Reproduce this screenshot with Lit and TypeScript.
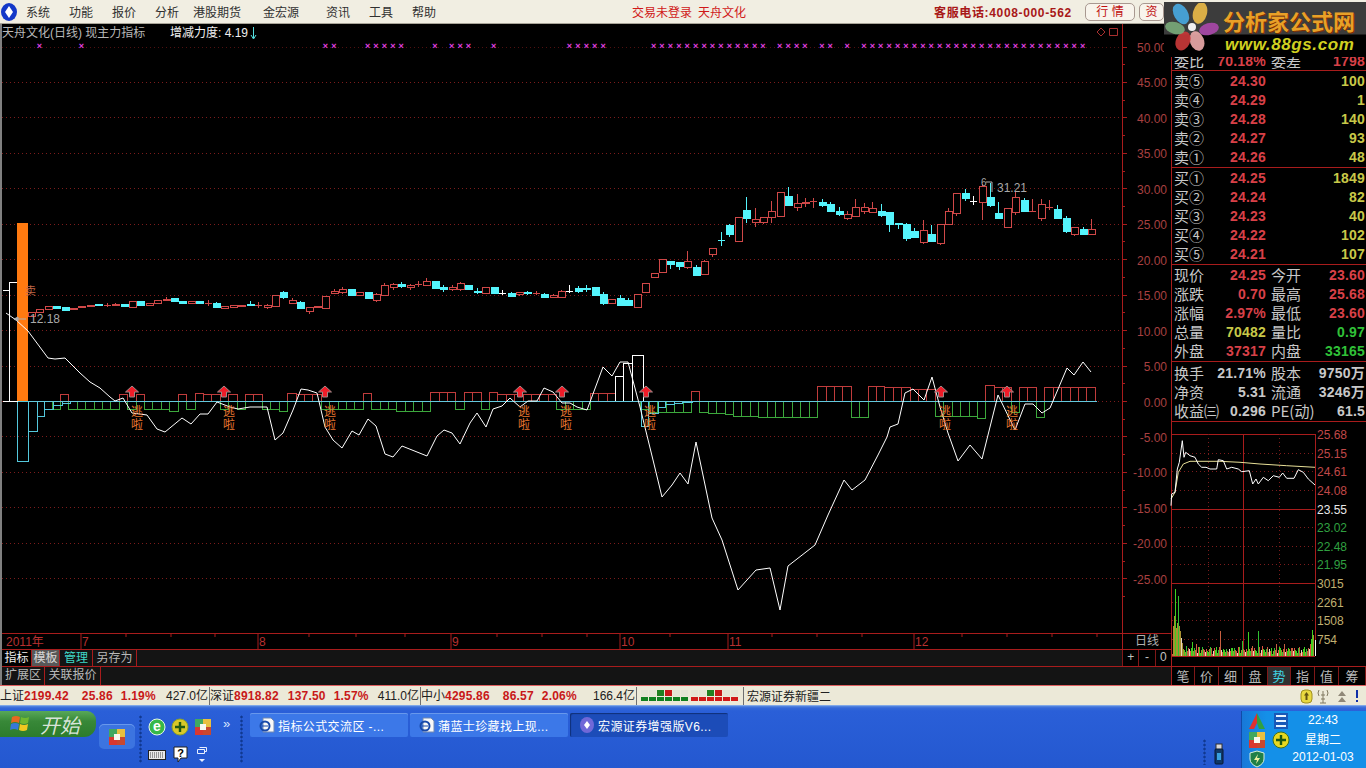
import { LitElement, html, css, svg } from "lit";
import { customElement } from "lit/decorators.js";

const SANS = css`"Liberation Sans", "Noto Sans CJK SC", sans-serif`;

// y position of a price on the main chart, in svg px (svg starts at page y=24)
const TOP = 24;
const LEVELS = [50, 45, 40, 35, 30, 25, 20, 15, 10, 5, 0, -5, -10, -15, -20, -25];
const levelY = (v: number) => 401.5 - (v / 5) * 35.45 - TOP;

const STEP = 8.413;
const barX = (i: number) => 31 + STEP * i;

// kind, body top, body bottom, wick high, wick low (page px)
type Candle = [string, number, number, number?, number?];
const CANDLES: Candle[] = [
    ["r", 312, 316], ["r", 309, 312], ["r", 306, 309], ["c", 306, 308], ["c", 307, 310],
    ["r", 308, 309], ["r", 306, 307], ["r", 305, 306], ["c", 304, 305], ["r", 305, 305, 303, 307],
    ["r", 304, 305, 303, 306], ["c", 304, 306], ["r", 301, 307], ["c", 301, 305], ["r", 303, 305],
    ["r", 300, 303], ["r", 299, 300, 297, 301], ["c", 298, 301], ["c", 301, 303], ["r", 301, 303],
    ["c", 301, 303], ["r", 303, 303, 300, 306], ["c", 303, 307, 302, 308], ["r", 306, 308], ["r", 305, 307],
    ["r", 305, 306], ["c", 304, 305, 301, 306], ["r", 305, 305, 302, 308], ["r", 305, 307, 304, 309], ["r", 295, 306],
    ["c", 292, 297, 291, 299], ["r", 300, 303, 298, 304], ["c", 302, 308, 301, 309], ["r", 307, 311, 307, 314], ["r", 306, 307],
    ["r", 296, 308, 296, 309], ["r", 291, 293, 289, 294], ["r", 289, 292, 287, 294], ["c", 289, 295], ["r", 292, 295],
    ["c", 292, 298], ["r", 294, 300, 293, 302], ["r", 285, 295, 283, 296], ["r", 284, 287, 283, 290], ["c", 284, 286, 282, 288],
    ["r", 285, 287, 284, 290], ["r", 284, 284, 281, 287], ["r", 281, 285, 278, 286], ["c", 281, 288], ["c", 287, 289, 285, 292],
    ["r", 287, 289, 285, 291], ["r", 283, 289, 282, 291], ["c", 285, 289], ["c", 291, 292, 288, 294], ["r", 287, 293],
    ["c", 287, 293], ["w", 293, 293, 290, 295], ["c", 293, 296, 292, 297], ["r", 292, 294, 292, 296], ["c", 292, 293, 291, 295],
    ["r", 293, 293, 291, 295], ["c", 294, 297, 293, 298], ["r", 295, 297, 294, 298], ["r", 291, 297, 290, 298], ["w", 291, 291, 285, 293],
    ["c", 288, 291, 286, 293], ["c", 288, 289, 285, 292], ["c", 287, 295], ["c", 294, 303, 292, 305], ["r", 299, 303],
    ["c", 298, 305, 295, 306], ["c", 300, 305, 298, 306], ["r", 294, 307, 294, 308], ["r", 283, 292, 283, 293], ["r", 273, 277],
    ["r", 259, 272, 259, 273], ["c", 261, 264, 261, 269], ["c", 262, 266, 262, 270], ["r", 261, 267, 251, 269], ["c", 267, 275, 265, 276],
    ["r", 261, 274, 260, 275], ["r", 248, 254, 248, 257], ["c", 240, 240, 232, 246], ["c", 225, 234, 224, 237], ["r", 217, 241],
    ["c", 210, 218, 197, 223], ["r", 219, 222, 208, 227], ["r", 217, 222, 217, 224], ["r", 211, 217, 201, 223], ["r", 192, 216, 192, 217],
    ["c", 196, 205, 187, 205], ["r", 203, 207, 194, 211], ["r", 202, 203, 198, 207], ["r", 201, 201, 198, 208], ["c", 202, 205, 199, 207],
    ["c", 204, 211, 202, 211], ["c", 211, 214, 207, 216], ["r", 214, 218, 211, 220], ["r", 207, 216, 199, 217], ["r", 207, 211, 203, 214],
    ["r", 208, 212, 202, 213], ["c", 211, 215, 204, 217], ["c", 212, 224, 212, 232], ["c", 223, 224, 223, 229], ["c", 224, 238, 223, 241],
    ["c", 231, 237, 228, 238], ["r", 230, 242, 220, 244], ["c", 234, 241, 225, 242], ["r", 224, 243, 224, 245], ["r", 211, 224, 208, 225],
    ["r", 193, 213, 193, 216], ["c", 193, 198, 189, 201], ["w", 201, 201, 196, 205], ["r", 186, 202, 184, 220], ["c", 197, 205, 183, 207],
    ["c", 213, 218, 202, 219], ["r", 208, 227], ["r", 197, 212, 192, 215], ["c", 200, 211, 198, 211], ["r", 211, 211, 199, 211],
    ["r", 204, 218, 199, 221], ["r", 207, 207, 200, 210], ["c", 209, 218, 205, 219], ["c", 218, 231, 216, 233], ["r", 227, 234, 227, 236],
    ["c", 229, 234, 227, 234], ["r", 229, 234, 219, 234],
];

// histogram height per candle: positive is a red bar above zero, negative green below
const RED_BARS: Record<number, number> = {
    4: 7, 11: 7, 13: 7, 18: 7, 20: 8, 21: 7, 22: 7, 24: 7, 26: 7, 27: 7, 31: 8, 32: 7, 33: 7, 34: 7,
    40: 8, 48: 9, 49: 9, 50: 9, 52: 9, 53: 9, 55: 9, 56: 7, 57: 7, 58: 7, 59: 7, 60: 7, 61: 7, 62: 7,
    67: 8, 68: 8, 69: 8, 79: 10, 94: 15, 95: 15, 96: 15, 97: 15, 100: 15, 101: 15, 102: 14, 103: 14, 104: 14,
    105: 12, 106: 12, 107: 12, 114: 16, 115: 14, 116: 14, 118: 14, 119: 14, 121: 14, 122: 14, 123: 14,
    124: 14, 125: 14, 126: 14,
};
const GREEN_DEEP: Record<number, number> = {
    17: 10, 30: 10, 44: 10, 45: 10, 46: 10, 47: 10, 79: 0, 80: 11, 81: 12, 82: 12, 83: 13, 84: 15, 85: 15, 86: 15,
    87: 16, 88: 16, 89: 16, 90: 16, 91: 16, 92: 16, 93: 16, 98: 16, 99: 16, 108: 15, 109: 15, 110: 15, 111: 15,
    112: 15, 113: 17, 117: 11, 120: 16, 73: 8, 74: 11, 75: 11, 76: 11, 77: 11, 78: 11,
};
const CYAN_BARS: [number, number, number][] = [
    [17, 28, 60], [28, 37, 30], [37, 44, 15], [44, 53, 8], [53, 62, 4], [62, 70, 2],
    [641, 648, 25], [648, 658, 12], [658, 665, 6], [665, 674, 3], [674, 682, 2], [682, 692, 1],
];
const WHITE_BARS: [number, number, number][] = [[9, 17, 119], [615, 623, 25], [623, 632, 38], [632, 643, 46]];

const ARROWS = [132, 224, 325, 520, 562, 646, 941, 1007];
const ESCAPES = [137, 229, 330, 524, 566, 650, 945, 1012];
const CROSSES = [
    1, 6, 35, 36, 40, 41, 42, 43, 44, 48, 50, 51, 52, 55, 64, 65, 66, 67, 68,
    74, 75, 76, 77, 78, 79, 80, 81, 82, 83, 84, 85, 86, 87, 89, 90, 91, 92, 94, 95, 97,
    99, 100, 101, 102, 103, 104, 105, 106, 107, 108, 109, 110, 111, 112, 113, 114, 115, 116, 117, 118, 119, 120, 121, 122, 123, 124, 125,
];

const FORCE_LINE =
    "6,313 16,320 28,331 48,358 55,359 65,358 80,373 90,382 100,388 110,397 115,401 123,398 132,413 147,415 157,429 165,432 182,418 191,424 200,414 208,414 217,402 230,407 238,409 250,407 267,407 275,440 283,433 293,410 301,389 308,390 317,393 325,427 333,440 342,448 352,431 359,435 368,419 376,426 385,454 393,457 402,446 427,456 437,436 444,430 452,433 460,444 470,423 477,413 486,427 493,409 502,406 510,398 520,407 528,401 537,401 544,388 553,392 562,403 570,403 577,407 587,410 603,367 612,376 620,362 628,362 640,407 653,460 662,497 672,485 680,473 688,484 696,442 712,518 722,540 738,590 756,570 770,568 780,610 788,566 815,545 828,515 844,480 852,490 865,480 878,455 887,437 890,427 898,424 905,393 913,389 924,400 932,377 940,407 948,433 958,461 970,445 982,459 998,395 1015,430 1025,404 1033,404 1042,413 1050,408 1067,368 1074,375 1083,362 1091,372";

// intraday mini chart, zoomed coordinates relative to (1120,430) at 3x
const MINI_PRICE: [number, number][] = [
    [153, 230], [155, 195], [165, 190], [172, 120], [178, 100], [187, 35], [192, 85], [197, 70], [210, 80], [225, 85],
    [235, 105], [245, 115], [258, 115], [270, 120], [290, 120], [295, 92], [310, 95], [320, 120], [335, 115], [355, 120],
    [365, 128], [388, 125], [398, 165], [408, 150], [415, 165], [430, 145], [445, 155], [460, 140], [478, 145], [488, 132],
    [500, 148], [522, 148], [535, 122], [550, 130], [565, 150], [585, 168],
];
const MINI_AVG: [number, number][] = [
    [153, 210], [165, 190], [175, 130], [190, 105], [210, 97], [240, 97], [300, 97], [360, 100], [420, 105], [500, 110], [585, 115],
];
const miniPts = (pts: [number, number][]) =>
    pts.map(([x, y]) => `${(x / 3 - 52).toFixed(1)},${(y / 3 - 5).toFixed(1)}`).join(" ");

const MINI_LABELS: [string, string][] = [
    ["25.68", "#c04848"], ["25.15", "#c04848"], ["24.61", "#c04848"], ["24.08", "#c04848"], ["23.55", "#e8e8e8"],
    ["23.02", "#30a040"], ["22.48", "#30a040"], ["21.95", "#30a040"],
    ["3015", "#c0b070"], ["2261", "#c0b070"], ["1508", "#c0b070"], ["754", "#c0b070"],
];

const VOL_PEAKS: Record<number, number> = {
    1: 30, 2: 40, 3: 67, 4: 28, 5: 33, 6: 60, 7: 30, 8: 25, 9: 18, 10: 13, 14: 10, 16: 8, 20: 14, 24: 12, 26: 9, 30: 9,
    38: 9, 44: 9, 48: 25, 60: 8, 66: 9, 70: 15, 76: 24, 80: 10, 86: 25, 90: 10, 95: 9, 104: 12, 108: 8, 112: 12, 116: 8,
    120: 8, 126: 8, 132: 9, 136: 8, 138: 12, 139: 17, 140: 26, 141: 21, 142: 29,
};
const VOL_COLORS = ["#c86040", "#30c030", "#a89030", "#40d020", "#e05040", "#e8d8c0"];

const ROW_SELL = [
    ["卖⑤", "24.30", "100"], ["卖④", "24.29", "1"], ["卖③", "24.28", "140"], ["卖②", "24.27", "93"], ["卖①", "24.26", "48"],
];
const ROW_BUY = [
    ["买①", "24.25", "1849"], ["买②", "24.24", "82"], ["买③", "24.23", "40"], ["买④", "24.22", "102"], ["买⑤", "24.21", "107"],
];
const ROW_QUOTE = [
    ["现价", "24.25", "red", "今开", "23.60", "red"],
    ["涨跌", "0.70", "red", "最高", "25.68", "red"],
    ["涨幅", "2.97%", "red", "最低", "23.60", "red"],
    ["总量", "70482", "yel", "量比", "0.97", "grn"],
    ["外盘", "37317", "red", "内盘", "33165", "grn"],
];
const ROW_FINANCE = [
    ["换手", "21.71%", "gry", "股本", "9750万", "gry"],
    ["净资", "5.31", "gry", "流通", "3246万", "gry"],
    ["收益㈢", "0.296", "gry", "PE(动)", "61.5", "gry"],
];

const MENU = [
    ["系统", 43], ["功能", 43], ["报价", 43], ["分析", 38], ["港股期货", 70], ["金宏源", 63], ["资讯", 43], ["工具", 43], ["帮助", 43],
] as const;
const MONTHS: [string, number][] = [["7", 81], ["8", 258], ["9", 451], ["10", 620], ["11", 728], ["12", 914]];
const DATE_TICKS = [124, 169, 213, 307, 354, 403, 495, 540, 585, 668, 770, 815, 860, 960, 1005, 1050, 1095];
const SIDE_TABS = ["笔", "价", "细", "盘", "势", "指", "值", "筹"];
const LED_COLS = [0, 1, 2, 3, 4, 5];

function chartGrid() {
    return svg`
        ${LEVELS.map((v) => {
            const y = levelY(v);
            return svg`
                <line x1="2" x2="1122" y1=${y} y2=${y} class="dots"></line>
                <line x1="1122" x2="1127" y1=${y} y2=${y} class="axis"></line>
                <line x1="1122" x2="1125" y1=${y + 17.7} y2=${y + 17.7} class="axis"></line>
                <text x="1167" y=${y + 5} text-anchor="end" class="tick">${v.toFixed(2)}</text>
            `;
        })}
        <line x1="1122.5" x2="1122.5" y1="0" y2="609" class="axis"></line>
        <line x1="2" x2="1122" y1="23" y2="23" class="dots faint"></line>
    `;
}

function candles() {
    return CANDLES.map(([kind, top, bot, hi, lo], i) => {
        const x = Math.round(barX(i)) + 0.5;
        const color = kind === "c" ? "#54f4fc" : kind === "w" ? "#ffffff" : "#d04848";
        const high = (hi ?? top) - TOP;
        const low = (lo ?? bot) - TOP;
        const t = top - TOP;
        const h = bot - top;
        const wick = svg`<line x1=${x} x2=${x} y1=${high} y2=${low} stroke=${color}></line>`;
        if (h === 0) {
            return svg`${wick}<line x1=${x - 3.5} x2=${x + 3.5} y1=${t + 0.5} y2=${t + 0.5} stroke=${color}></line>`;
        }
        return svg`${wick}<rect x=${x - 3.5} y=${t + 0.5} width="7" height=${h}
            fill=${kind === "c" ? color : "#000"} stroke=${color}></rect>`;
    });
}

function histogram() {
    const base = 401.5 - TOP;
    const bars = CANDLES.map((_, i) => {
        const left = barX(i) - STEP / 2;
        const up = RED_BARS[i];
        if (up) {
            return svg`<rect x=${left} y=${base - up} width=${STEP} height=${up} fill="none" stroke="#c03c3c"></rect>`;
        }
        if (i < 3 || (i >= 70 && i <= 72)) return "";
        const down = GREEN_DEEP[i] ?? 8;
        return svg`<rect x=${left} y=${base} width=${STEP} height=${down} fill="none" stroke="#3ca83c"></rect>`;
    });
    return svg`
        ${bars}
        ${CYAN_BARS.map(([a, b, d]) => svg`<rect x=${a} y=${base} width=${b - a} height=${d} fill="none" stroke="#54c8dc"></rect>`)}
        ${WHITE_BARS.map(([a, b, h]) => svg`<rect x=${a} y=${base - h} width=${b - a} height=${h} fill="none" stroke="#fff"></rect>`)}
        <line x1="3" x2="9" y1=${290 - TOP} y2=${290 - TOP} stroke="#fff"></line>
        <line x1="3" x2="17" y1=${base} y2=${base} stroke="#fff"></line>
        <rect x="17" y=${223 - TOP} width="11" height=${401 - 223} fill="#ff7a10"></rect>
        <line x1="28" x2="1097" y1=${base} y2=${base} stroke="#64c8dc"></line>
    `;
}

function markers() {
    return svg`
        ${ARROWS.map(
            (x) => svg`<path transform="translate(${x} ${386 - TOP})"
                d="M0 0 L6.5 6 H2.5 V11 H-2.5 V6 H-6.5 Z" fill="#f01c28" stroke="#a08888" stroke-width="1"></path>`,
        )}
        ${ESCAPES.map(
            (x) => svg`<text x=${x} y=${416 - TOP} text-anchor="middle" class="esc">逃</text>
                <text x=${x} y=${429 - TOP} text-anchor="middle" class="esc">啦</text>`,
        )}
        ${CROSSES.map((i) => svg`<text x=${barX(i)} y=${49 - TOP} text-anchor="middle" class="cross">×</text>`)}
    `;
}

function miniVolume() {
    const bars = [];
    for (let n = 0; n < 142; n++) {
        const h = VOL_PEAKS[n] ?? 2 + ((n * 7) % 5) + ((n * 13) % 4);
        const color = n < 12 && n % 3 !== 0 ? "#a89030" : VOL_COLORS[(n * 5 + (n >> 2)) % 6];
        bars.push(svg`<line x1=${n + 0.5} x2=${n + 0.5} y1="222" y2=${222 - h} stroke=${color}></line>`);
    }
    return bars;
}

@customElement("app-root")
export class AppRoot extends LitElement {
    private _renderHeader() {
        return html`
            <div class="menu">
                <svg class="app-logo" width="18" height="20" viewBox="0 0 18 20">
                    <ellipse cx="9" cy="10" rx="8" ry="9" fill="#1438c8"></ellipse>
                    <path d="M9 4 L13 10 L9 16 L5 10 Z" fill="#fff"></path>
                </svg>
                <div class="menu-items">
                    ${MENU.map(([label, w]) => html`<span style="width:${w}px">${label}</span>`)}
                </div>
                <span class="login">交易未登录</span>
                <span class="stock">天舟文化</span>
                <span class="hotline">客服电话:4008-000-562</span>
                <span class="pill wide">行 情</span>
                <span class="pill">资</span>
            </div>
        `;
    }

    private _renderBrand() {
        return html`
            <div class="brand">
                <svg class="flower" width="54" height="48" viewBox="0 0 54 48">
                    <g transform="translate(27 24)" fill-opacity="0.92">
                        <ellipse cx="-11" cy="-13" rx="7" ry="11" fill="#48a8e0" transform="rotate(-30 -11 -13)"></ellipse>
                        <ellipse cx="8" cy="-14" rx="7" ry="11" fill="#e8b848" transform="rotate(15 8 -14)"></ellipse>
                        <ellipse cx="17" cy="2" rx="6" ry="10" fill="#a848a8" transform="rotate(75 17 2)"></ellipse>
                        <ellipse cx="5" cy="14" rx="7" ry="10" fill="#e8a8a8" transform="rotate(-20 5 14)"></ellipse>
                        <ellipse cx="-9" cy="14" rx="7" ry="10" fill="#c83838" transform="rotate(25 -9 14)"></ellipse>
                        <ellipse cx="-17" cy="1" rx="6" ry="10" fill="#78a878" transform="rotate(-75 -17 1)"></ellipse>
                        <circle r="4" fill="#fff"></circle>
                    </g>
                </svg>
                <div class="brand-name">分析家公式网</div>
                <div class="brand-url">www.88gs.com</div>
            </div>
        `;
    }

    private _renderChart() {
        return html`
            <svg class="chart" width="1171" height="609" viewBox="0 0 1171 609">
                ${chartGrid()}
                ${histogram()}
                <polyline points=${FORCE_LINE} transform="translate(0 ${-TOP})" fill="none" stroke="#fff"></polyline>
                ${candles()}
                ${markers()}
                <text x="2" y="13" class="title">天舟文化(日线) 现主力指标</text>
                <text x="170" y="13" class="title bright">增减力度: 4.19</text>
                <path d="M253.5 3 V14 M251 11 L253.5 15 L256 11" fill="none" stroke="#54e0e0"></path>
                <path d="M1101 4 L1105 8 L1101 12 L1097 8 Z M1109.5 4.5 H1117.5 V11.5 H1109.5 Z" fill="none" stroke="#a83030"></path>
                <text x="30" y=${319 + 4 - TOP} class="note">12.18</text>
                <path d="M14 ${319 - TOP} H26 M14 ${319 - TOP} L18 ${317 - TOP} V${321 - TOP} Z" fill="#b0b0b0" stroke="#b0b0b0"></path>
                <text x="25" y=${295 - TOP} class="sell-mark">卖</text>
                <text x="981" y=${186 - TOP} class="note small">6</text>
                <path d="M986 ${182 - TOP} H992 V${192 - TOP}" fill="none" stroke="#b0b0b0"></path>
                <text x="997" y=${192 - TOP} class="note">31.21</text>
            </svg>
        `;
    }

    private _renderDateRow() {
        return html`
            <div class="row date-row">
                <svg class="dates" width="1120" height="15" viewBox="0 0 1120 15">
                    <text x="4" y="12" class="year">2011年</text>
                    ${DATE_TICKS.map((x) => svg`<line x1=${x} x2=${x} y1="0" y2="3" class="axis"></line>`)}
                    ${MONTHS.map(
                        ([m, x]) => svg`<line x1=${x - 2} x2=${x - 2} y1="0" y2="15" class="axis"></line>
                            <text x=${x - 1} y="12" class="year">${m}</text>`,
                    )}
                </svg>
                <div class="period">日线</div>
            </div>
        `;
    }

    private _renderTabRows() {
        return html`
            <div class="row tab-row">
                <div class="tabs">
                    <span class="tab on" style="width:30px">指标</span>
                    <span class="tab tpl" style="width:28px">模板</span>
                    <span class="tab cyan" style="width:33px">管理</span>
                    <span class="tab" style="width:44px">另存为</span>
                </div>
                <div class="zoom-btns"><span>+</span><span>-</span><span>0</span></div>
            </div>
            <div class="row ext-row">
                <div class="tabs">
                    <span class="tab" style="width:43px">扩展区</span>
                    <span class="tab" style="width:56px">关联报价</span>
                </div>
                <div class="blank"></div>
            </div>
        `;
    }

    private _renderSide() {
        return html`
            <aside class="side">
                <div class="quote head">
                    <span class="lbl">委比</span><span class="num red">70.18%</span><span class="lbl">委差</span><span class="num red">1798</span>
                </div>
                <div class="section">
                    ${ROW_SELL.map((r) => this._bookRow(r))}
                </div>
                <div class="section">
                    ${ROW_BUY.map((r) => this._bookRow(r))}
                </div>
                <div class="section">
                    ${ROW_QUOTE.map((r) => this._quoteRow(r))}
                </div>
                <div class="section finance">
                    ${ROW_FINANCE.map((r) => this._quoteRow(r))}
                </div>
                ${this._renderMini()}
                <div class="side-tabs">
                    ${SIDE_TABS.map((t) => html`<span class=${t === "势" ? "sel" : ""}>${t}</span>`)}
                </div>
            </aside>
        `;
    }

    private _bookRow([label, price, qty]: string[]) {
        return html`<div class="quote">
            <span class="lbl">${label}</span><span class="num red">${price}</span><span></span><span class="num yel">${qty}</span>
        </div>`;
    }

    private _quoteRow([a, av, ac, b, bv, bc]: string[]) {
        return html`<div class="quote">
            <span class="lbl">${a}</span><span class="num ${ac}">${av}</span><span class="lbl">${b}</span><span class="num ${bc}">${bv}</span>
        </div>`;
    }

    private _renderMini() {
        return html`
            <svg class="mini" width="194" height="232" viewBox="0 0 194 232">
                ${MINI_LABELS.map((_, i) => {
                    const y = 0.5 + i * 18.63;
                    return svg`<line x1="0" x2="143" y1=${y} y2=${y} class=${i % 4 === 0 ? "axis" : "dots"}></line>`;
                })}
                <line x1="71.5" x2="71.5" y1="0" y2="222" class="axis"></line>
                <line x1="36.5" x2="36.5" y1="0" y2="222" class="dots"></line>
                <line x1="107.5" x2="107.5" y1="0" y2="222" class="dots"></line>
                <line x1="143.5" x2="143.5" y1="0" y2="222" class="axis"></line>
                <line x1="0" x2="143" y1="222.5" y2="222.5" class="axis"></line>
                ${MINI_LABELS.map(
                    ([t, c], i) => svg`<text x="145" y=${5 + i * 18.63} fill=${c} class="mini-label">${t}</text>`,
                )}
                <polyline points=${miniPts(MINI_AVG)} fill="none" stroke="#e8e098"></polyline>
                <polyline points=${miniPts(MINI_PRICE)} fill="none" stroke="#fff"></polyline>
                ${miniVolume()}
                <line x1="143.5" x2="143.5" y1="206" y2="222" stroke="#fff"></line>
            </svg>
        `;
    }

    private _renderStatus() {
        return html`
            <div class="status">
                <span class="idx" style="width:210px">上证<b>2199.42</b><b class="g1">25.86</b><b class="g2">1.19%</b><em>427.0亿</em></span>
                <span class="idx" style="width:211px">深证<b>8918.82</b><b class="g1 mid">137.50</b><b class="g2">1.57%</b><em>411.0亿</em></span>
                <span class="idx last" style="width:216px">中小<b>4295.86</b><b class="g1">86.57</b><b class="g2">2.06%</b><em>166.4亿</em></span>
                <div class="leds">
                    <div class="led-set">
                        ${LED_COLS.map((i) => html`<i class=${i === 3 ? "top-r" : i === 2 ? "top-g" : ""}></i>`)}
                        ${LED_COLS.map(() => html`<i class="g"></i>`)}
                    </div>
                    <div class="led-set">
                        ${LED_COLS.map((i) => html`<i class=${i === 3 ? "top-r" : i === 2 ? "top-g" : ""}></i>`)}
                        ${LED_COLS.map(() => html`<i class="r"></i>`)}
                    </div>
                </div>
                <span class="broker">宏源证券新疆二</span>
                <div class="status-icons">
                    <svg width="70" height="18" viewBox="0 0 70 18">
                        <rect x="5" y="3" width="11" height="13" rx="4" fill="#e8d840" stroke="#a09020"></rect>
                        <path d="M10.5 5 L13 8.5 H8 Z M9.5 8 H11.5 V13 H9.5 Z" fill="#605010"></path>
                        <path d="M27 4 V16 M24 16 H30 M25 8 H29 M25 12 H29" stroke="#807860" fill="none"></path>
                        <path d="M23 3 Q21 6 23 9 M31 3 Q33 6 31 9" stroke="#807860" fill="none"></path>
                        <path d="M46 4 L50 9 H42 Z M46 10 L50 15 H42 Z" fill="#908878"></path>
                        <path d="M60 3 H62 V11 H60 Z M60 13 H62 V15 H60 Z" fill="#1030a8"></path>
                    </svg>
                </div>
            </div>
        `;
    }

    private _renderTaskbar() {
        return html`
            <div class="taskbar">
                <div class="start">
                    <svg width="24" height="22" viewBox="0 0 24 22">
                        <path d="M3 4 Q7 2 11 4 L10 10 Q6 8 2 10 Z" fill="#e86820"></path>
                        <path d="M12 4 Q16 6 20 4 L19 10 Q15 12 11 10 Z" fill="#70b830"></path>
                        <path d="M2 11 Q6 9 10 11 L9 17 Q5 15 1 17 Z" fill="#3878d8"></path>
                        <path d="M11 11 Q15 13 19 11 L18 17 Q14 19 10 17 Z" fill="#f0c820"></path>
                    </svg>
                    <span>开始</span>
                </div>
                <div class="quick-btn">${this._tileIcon()}</div>
                <div class="grip"></div>
                <div class="launch">
                    <div class="launch-row">
                        <svg width="18" height="18" viewBox="0 0 18 18">
                            <circle cx="9" cy="9" r="8" fill="#38b848" stroke="#e8f8e8"></circle>
                            <text x="9" y="13" text-anchor="middle" class="e-icon">e</text>
                        </svg>
                        <svg width="18" height="18" viewBox="0 0 18 18">
                            <circle cx="9" cy="9" r="8" fill="#d8c828" stroke="#88a030"></circle>
                            <path d="M9 4 V14 M4 9 H14" stroke="#205810" stroke-width="2.4"></path>
                        </svg>
                        ${this._tileIcon()}
                        <span class="more">»</span>
                    </div>
                    <div class="launch-row low">
                        <svg width="18" height="12" viewBox="0 0 18 12">
                            <rect x="0.5" y="2.5" width="17" height="9" fill="#e8e8e8" stroke="#202020"></rect>
                            <path d="M2 5 H16 M2 7 H16 M2 9 H16" stroke="#404040" stroke-dasharray="1 1"></path>
                        </svg>
                        <svg width="16" height="17" viewBox="0 0 16 17">
                            <path d="M1 1 H14 V12 H8 L5 16 V12 H1 Z" fill="#fff" stroke="#202020"></path>
                            <text x="7.5" y="10.5" text-anchor="middle" class="q-icon">?</text>
                        </svg>
                        <svg width="12" height="20" viewBox="0 0 12 20">
                            <path d="M1.5 5.5 H8.5 V9.5 H1.5 Z M3.5 3.5 H10.5 V7.5 H8.5" fill="none" stroke="#e8f0ff"></path>
                            <path d="M3 15 H9 L6 18 Z" fill="#e8f0ff"></path>
                        </svg>
                    </div>
                </div>
                <div class="grip"></div>
                <div class="tasks">
                    <div class="task">${this._docIcon()}<span>指标公式交流区 -...</span></div>
                    <div class="task">${this._docIcon()}<span>蒲蓝士珍藏找上现...</span></div>
                    <div class="task active">
                        <svg width="16" height="16" viewBox="0 0 16 16">
                            <ellipse cx="8" cy="8" rx="7" ry="8" fill="#7068d8"></ellipse>
                            <path d="M8 4 L11 8 L8 12 L5 8 Z" fill="#fff"></path>
                        </svg>
                        <span>宏源证券增强版V6...</span>
                    </div>
                </div>
                <div class="grip tray-grip"></div>
                <svg class="usb" width="14" height="22" viewBox="0 0 14 22">
                    <rect x="4" y="1" width="6" height="6" fill="#d8d8d8" stroke="#303030"></rect>
                    <rect x="3" y="6" width="8" height="15" rx="1" fill="#103868" stroke="#081830"></rect>
                    <rect x="5" y="10" width="4" height="7" fill="#38a0e0"></rect>
                </svg>
                <div class="tray">
                    <div class="tray-icons">
                        <svg width="18" height="18" viewBox="0 0 18 18">
                            <path d="M9 1 L17 17 H11 L9 11 Z" fill="#30a040"></path>
                            <path d="M9 1 L1 17 H6 L9 11 Z" fill="#e03030"></path>
                        </svg>
                        <svg width="16" height="18" viewBox="0 0 16 18">
                            <rect x="1" y="1" width="14" height="16" fill="#1858b8"></rect>
                            <path d="M3 4 H13 M3 9 H13 M3 14 H13" stroke="#e8f4ff" stroke-width="2"></path>
                        </svg>
                        ${this._tileIcon()}
                        <svg width="18" height="18" viewBox="0 0 18 18">
                            <circle cx="9" cy="9" r="8" fill="#e8d820" stroke="#407020"></circle>
                            <path d="M9 4 V14 M4 9 H14" stroke="#205810" stroke-width="2.4"></path>
                        </svg>
                        <svg class="shield" width="16" height="18" viewBox="0 0 16 18">
                            <path d="M8 1 L15 3 V9 Q15 14 8 17 Q1 14 1 9 V3 Z" fill="#208048" stroke="#d8f0d8"></path>
                            <path d="M9 4 L5 10 H8 L7 14 L11 8 H8 Z" fill="#f0f0a0"></path>
                        </svg>
                    </div>
                    <div class="clock">
                        <span>22:43</span>
                        <span>星期二</span>
                        <span>2012-01-03</span>
                    </div>
                </div>
            </div>
        `;
    }

    private _tileIcon() {
        return html`<svg width="18" height="18" viewBox="0 0 18 18">
            <rect x="1" y="1" width="16" height="16" rx="1" fill="#f0f0e0"></rect>
            <path d="M1 1 H9 V9 H1 Z" fill="#40a860"></path>
            <path d="M9 1 H17 V9 H9 Z" fill="#e8c040"></path>
            <path d="M1 9 H9 V17 H1 Z" fill="#d83830"></path>
            <path d="M9 9 H17 V17 H9 Z" fill="#c84830"></path>
            <rect x="6" y="6" width="6" height="6" fill="#f8f8f0"></rect>
        </svg>`;
    }

    private _docIcon() {
        return html`<svg width="16" height="16" viewBox="0 0 16 16">
            <path d="M4 1 H12 L15 4 V15 H4 Z" fill="#f8f8f8" stroke="#7088b0"></path>
            <circle cx="6" cy="9" r="4.5" fill="none" stroke="#1848a8" stroke-width="2"></circle>
            <path d="M3 9 H9" stroke="#1848a8"></path>
        </svg>`;
    }

    render() {
        return html`
            ${this._renderHeader()}
            ${this._renderBrand()}
            <div class="main">
                <div class="left">
                    ${this._renderChart()}
                    ${this._renderDateRow()}
                    ${this._renderTabRows()}
                </div>
                ${this._renderSide()}
            </div>
            ${this._renderStatus()}
            ${this._renderTaskbar()}
        `;
    }

    static styles = css`
        :host {
            display: block;
            position: relative;
            width: 1366px;
            height: 768px;
            overflow: hidden;
            background: #000;
            font-family: ${SANS};
            font-size: 12px;
        }
        svg {
            display: block;
            flex: none;
        }
        text {
            font-family: ${SANS};
        }

        /* top menu */
        .menu {
            height: 24px;
            display: flex;
            align-items: center;
            background: #f1eee2;
            color: #303030;
            box-sizing: border-box;
            border-bottom: 1px solid #a8a498;
        }
        .menu-items {
            display: flex;
            margin-left: 8px;
            width: 605px;
        }
        .menu-items span {
            flex: none;
        }
        .login {
            color: #d01818;
            width: 66px;
            padding-left: 1px;
        }
        .stock {
            color: #d01818;
            width: 236px;
        }
        .hotline {
            color: #a81818;
            font-weight: bold;
            width: 151px;
            white-space: nowrap;
            letter-spacing: 0.65px;
        }
        .pill {
            width: 25px;
            height: 18px;
            margin-right: 4px;
            line-height: 17px;
            box-sizing: border-box;
            text-align: center;
            color: #c01010;
            background: #f8f4ec;
            border: 1px solid #a89890;
            border-radius: 5px;
            flex: none;
        }
        .pill.wide {
            width: 50px;
        }

        /* logo banner over the quote panel */
        .brand {
            position: absolute;
            z-index: 2;
            left: 1164px;
            top: 2px;
            width: 202px;
            height: 55px;
            background: linear-gradient(#3c3c3c 0, #3c3c3c 32px, #000 33px);
        }
        .flower {
            position: absolute;
            left: 1px;
            top: 1px;
        }
        .brand-name {
            position: absolute;
            left: 59px;
            top: 3px;
            font: bold 22px "Noto Sans CJK SC", sans-serif;
            line-height: 30px;
            color: #e8a028;
            text-shadow: 1px 1px 0 #803000;
            white-space: nowrap;
        }
        .brand-url {
            position: absolute;
            left: 61px;
            top: 34px;
            font: italic bold 17px "Liberation Sans", sans-serif;
            line-height: 18px;
            color: #d0d020;
            letter-spacing: 0.6px;
        }

        /* chart area */
        .main {
            display: flex;
            height: 661px;
        }
        .left {
            width: 1171px;
            flex: none;
            display: flex;
            flex-direction: column;
            border-left: 2px solid #808080;
            box-sizing: border-box;
        }
        .chart {
            margin-left: -2px;
            shape-rendering: crispEdges;
        }
        .chart polyline,
        .chart path {
            shape-rendering: auto;
        }
        .dots {
            stroke: #7c1c1c;
            stroke-dasharray: 1 3;
        }
        .faint {
            stroke: #501010;
        }
        .axis {
            stroke: #a81c1c;
        }
        .tick {
            font-size: 12px;
            fill: #a84040;
        }
        .title {
            font-size: 12px;
            fill: #b8b8b8;
        }
        .title.bright {
            fill: #f0f0f0;
        }
        .note {
            font-size: 12px;
            fill: #a8a8a8;
        }
        .note.small {
            font-size: 10px;
        }
        .sell-mark {
            font-size: 11px;
            fill: #c06848;
        }
        .esc {
            font-size: 12px;
            fill: #e87830;
        }
        .cross {
            font-size: 9px;
            fill: #e040e0;
            font-weight: bold;
        }

        .row {
            display: flex;
            flex: none;
            border-top: 1px solid #a81c1c;
        }
        .date-row {
            height: 16px;
            box-sizing: border-box;
        }
        .dates {
            width: 1120px;
            flex: none;
        }
        .year {
            font-size: 12px;
            fill: #b83030;
        }
        .period {
            flex: none;
            width: 49px;
            box-sizing: border-box;
            border-left: 1px solid #a81c1c;
            color: #b0b0b0;
            text-align: center;
            line-height: 15px;
        }
        .tab-row {
            height: 17px;
            box-sizing: border-box;
            background: #141414;
        }
        .ext-row {
            height: 19px;
            box-sizing: border-box;
            background: #141414;
        }
        .tabs {
            width: 1120px;
            flex: none;
            display: flex;
        }
        .tab {
            box-sizing: border-box;
            flex: none;
            text-align: center;
            color: #b8b8b8;
            border-right: 1px solid #a81c1c;
            line-height: 16px;
            white-space: nowrap;
        }
        .tab.on {
            background: #000;
            color: #f0f0f0;
        }
        .tab.tpl {
            background: #585858;
            color: #d8d8d8;
        }
        .tab.cyan {
            color: #40d8c8;
        }
        .zoom-btns {
            flex: none;
            width: 49px;
            display: flex;
            background: #000;
        }
        .zoom-btns span {
            flex: 1;
            text-align: center;
            color: #c0c0c0;
            border-left: 1px solid #801818;
            line-height: 15px;
        }
        .blank {
            flex: none;
            width: 49px;
            background: #141414;
        }

        /* quote panel */
        .side {
            width: 195px;
            flex: none;
            box-sizing: border-box;
            border-left: 1px solid #a81c1c;
            background: #000;
            padding-top: 28px;
        }
        .head {
            border-bottom: 1px solid #a81c1c;
            box-sizing: border-box;
            height: 20px;
        }
        .section {
            padding-top: 1px;
            border-bottom: 1px solid #a81c1c;
        }
        .section.finance {
            padding-top: 2px;
        }
        .quote {
            display: grid;
            grid-template-columns: 30px 62px 5px 30px 64px;
            height: 19px;
            padding-left: 2px;
            align-items: center;
            white-space: nowrap;
        }
        .quote > :nth-child(3) {
            grid-column: 3 / 5;
        }
        .quote > .lbl:nth-child(3) {
            padding-left: 5px;
        }
        .lbl {
            font: 15px/19px "Noto Sans CJK SC", sans-serif;
            color: #c8c8c8;
            margin-top: -2px;
        }
        .num {
            font: bold 14px/19px "Liberation Sans", "Noto Sans CJK SC", sans-serif;
            text-align: right;
            letter-spacing: 0.2px;
        }
        .red {
            color: #d84048;
        }
        .yel {
            color: #c8c848;
        }
        .grn {
            color: #30c038;
        }
        .gry {
            color: #c8c8c8;
        }
        .mini {
            margin-top: 12px;
            overflow: visible;
            shape-rendering: crispEdges;
        }
        .mini polyline {
            shape-rendering: auto;
        }
        .mini-label {
            font-size: 12px;
        }
        .side-tabs {
            display: grid;
            grid-template-columns: 23px 24px 24px 25px 23px 24px 24px 27px;
            height: 18px;
            border-top: 1px solid #a81c1c;
            background: #000;
        }
        .side-tabs span {
            text-align: center;
            font: 13px/18px "Noto Sans CJK SC", sans-serif;
            color: #b8b8b8;
            border-right: 1px solid #801818;
        }
        .side-tabs .sel {
            background: #303030;
            color: #40d0e0;
        }

        /* index ticker */
        .status {
            height: 20px;
            display: flex;
            align-items: center;
            background: #ece9d8;
            border-top: 1px solid #e06060;
            box-sizing: border-box;
            color: #202020;
        }
        .idx {
            position: relative;
            flex: none;
            height: 18px;
            line-height: 18px;
            box-sizing: border-box;
            border-right: 1px solid #707070;
            white-space: nowrap;
        }
        .idx b {
            color: #c81818;
            font-size: 12px;
            letter-spacing: 0.2px;
        }
        .idx .g1 {
            margin-left: 13px;
        }
        .idx .g1.mid {
            margin-left: 9px;
        }
        .idx .g2 {
            margin-left: 8px;
        }
        .idx em {
            font-style: normal;
            position: absolute;
            right: 1px;
        }
        .leds {
            display: flex;
            gap: 2px;
            margin-left: 4px;
            width: 102px;
            flex: none;
            height: 18px;
            align-items: center;
            border-right: 1px solid #707070;
        }
        .led-set {
            display: grid;
            grid-template-columns: repeat(6, 7px);
            gap: 1px;
            width: 48px;
        }
        .led-set i {
            height: 6px;
            background: #e4e4d4;
        }
        .led-set .top-r {
            background: #c81818;
        }
        .led-set .top-g {
            background: #208020;
        }
        .led-set .g {
            height: 4px;
            background: #108020;
        }
        .led-set .r {
            height: 4px;
            background: #d01818;
        }
        .broker {
            margin-left: 3px;
        }
        .status-icons {
            margin-left: auto;
        }

        /* windows taskbar */
        .taskbar {
            height: 63px;
            position: relative;
            display: flex;
            box-sizing: border-box;
            padding-top: 6px;
            color: #fff;
            background: linear-gradient(#a8c8f0 0, #5888e0 1px, #3468d8 3px, #2a5fd8 6px, #2458d0 100%);
        }
        .start {
            flex: none;
            width: 96px;
            height: 26px;
            display: flex;
            align-items: center;
            gap: 7px;
            padding-left: 9px;
            box-sizing: border-box;
            background: linear-gradient(#58a858, #388838 40%, #2c7c2c);
            border-radius: 0 9px 12px 0;
        }
        .start span {
            font: italic 20px "Noto Sans CJK SC", sans-serif;
            color: #d8e4d8;
        }
        .quick-btn {
            flex: none;
            width: 36px;
            height: 25px;
            margin: 13px 0 0 3px;
            display: flex;
            align-items: center;
            justify-content: center;
            border-radius: 5px;
            background: #3c74e0;
            box-shadow: inset 0 1px 0 #6898ec;
        }
        .grip {
            flex: none;
            width: 3px;
            margin: 4px 0 0 4px;
            height: 48px;
            background-image: radial-gradient(#103890 1px, transparent 1.2px);
            background-size: 3px 4px;
        }
        .launch {
            flex: none;
            width: 88px;
            margin-left: 6px;
        }
        .launch-row {
            height: 24px;
            display: flex;
            gap: 5px;
            align-items: center;
            padding-top: 4px;
        }
        .launch-row.low {
            padding-top: 3px;
            gap: 7px;
        }
        .more {
            font-size: 13px;
            color: #d8e4ff;
            margin: -8px 0 0 6px;
        }
        .e-icon {
            font-size: 14px;
            font-weight: bold;
            fill: #fff;
        }
        .q-icon {
            font-size: 11px;
            font-weight: bold;
            fill: #000;
        }
        .tasks {
            flex: none;
            display: flex;
            gap: 2px;
            margin-left: 7px;
            padding-top: 2px;
            width: 956px;
        }
        .task {
            flex: none;
            width: 158px;
            height: 24px;
            box-sizing: border-box;
            padding-left: 9px;
            display: flex;
            gap: 3px;
            align-items: center;
            background: #3c78e8;
            border-radius: 2px;
            box-shadow: inset 0 1px 0 #6898ec;
            white-space: nowrap;
            letter-spacing: 0.4px;
        }
        .task.active {
            background: #1c4cb8;
            box-shadow: inset 1px 1px 1px #103078;
        }
        .tray-grip {
            position: absolute;
            left: 1203px;
            top: 34px;
            height: 26px;
            margin: 0;
        }
        .usb {
            position: absolute;
            left: 1212px;
            top: 38px;
        }
        .tray {
            position: absolute;
            left: 1241px;
            top: 6px;
            bottom: 0;
            right: 0;
            display: flex;
            background: linear-gradient(90deg, #1878d8, #1490e8 20%, #1490e8);
            border-left: 1px solid #104ca8;
        }
        .tray-icons {
            width: 50px;
            flex: none;
            display: grid;
            grid-template-columns: 24px 24px;
            padding-left: 3px;
            box-sizing: border-box;
            justify-items: center;
            align-items: center;
            align-content: space-around;
        }
        .tray-icons .shield {
            grid-column: 1;
        }
        .clock {
            flex: 1;
            display: flex;
            flex-direction: column;
            align-items: center;
            justify-content: space-around;
            padding: 0 12px 3px 0;
            white-space: nowrap;
        }
    `;
}
